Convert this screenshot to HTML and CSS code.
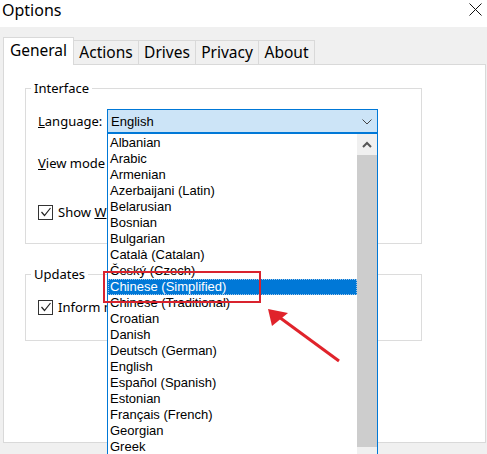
FILE: index.html
```html
<!DOCTYPE html>
<html>
<head>
<meta charset="utf-8">
<title>Options</title>
<link rel="stylesheet" href="styles.css">
</head>
<body>
<div class="window">
  <div class="titlebar">
    <span class="title">Options</span>
    <svg class="close" width="13" height="13" viewBox="0 0 13 13"><path d="M0.5 0.5 L12.5 12.5 M12.5 0.5 L0.5 12.5" stroke="#111" stroke-width="1" fill="none"/></svg>
  </div>
  <div class="tabs">
    <div class="tab tab-general active">General</div>
    <div class="tab tab-actions">Actions</div>
    <div class="tab tab-drives">Drives</div>
    <div class="tab tab-privacy">Privacy</div>
    <div class="tab tab-about">About</div>
  </div>
  <div class="panel">
    <fieldset class="group group-interface">
      <legend>Interface</legend>
      <div class="row row-lang">
        <span class="label"><u>L</u>anguage:</span>
        <div class="combo">
          <div class="combo-field">
            <span class="combo-text">English</span>
            <svg class="combo-chevron" width="10" height="6" viewBox="0 0 10 6"><polyline points="0.5,0.5 5,5 9.5,0.5" fill="none" stroke="#444" stroke-width="1"/></svg>
          </div>
          <div class="dropdown">
            <ul class="items">
              <li>Albanian</li>
              <li>Arabic</li>
              <li>Armenian</li>
              <li>Azerbaijani (Latin)</li>
              <li>Belarusian</li>
              <li>Bosnian</li>
              <li>Bulgarian</li>
              <li>Català (Catalan)</li>
              <li>Český (Czech)</li>
              <li class="selected">Chinese (Simplified)</li>
              <li>Chinese (Traditional)</li>
              <li>Croatian</li>
              <li>Danish</li>
              <li>Deutsch (German)</li>
              <li>English</li>
              <li>Español (Spanish)</li>
              <li>Estonian</li>
              <li>Français (French)</li>
              <li>Georgian</li>
              <li>Greek</li>
              <li>Hebrew</li>
            </ul>
            <div class="scrollbar">
              <div class="sb-up"><svg width="10" height="7" viewBox="0 0 10 7"><polyline points="1,6 5,2 9,6" fill="none" stroke="#555" stroke-width="2"/></svg></div>
              <div class="sb-thumb"></div>
            </div>
          </div>
        </div>
      </div>
      <div class="row row-view"><span class="label"><u>V</u>iew mode</span></div>
      <div class="row row-show">
        <span class="check"><svg width="12" height="12" viewBox="0 0 12 12"><polyline points="1.5,6 4.5,9.5 10.5,2" fill="none" stroke="#222" stroke-width="1.2"/></svg></span>
        <span class="check-label">Show <u>W</u>indows Explorer integration</span>
      </div>
    </fieldset>
    <fieldset class="group group-updates">
      <legend>Updates</legend>
      <div class="row row-inform">
        <span class="check"><svg width="12" height="12" viewBox="0 0 12 12"><polyline points="1.5,6 4.5,9.5 10.5,2" fill="none" stroke="#222" stroke-width="1.2"/></svg></span>
        <span class="check-label">Inform me about new versions</span>
      </div>
    </fieldset>
  </div>
  <div class="annot-box"></div>
  <svg class="annot-arrow" width="487" height="454" viewBox="0 0 487 454">
    <line x1="279" y1="317" x2="339" y2="361" stroke="#e0232b" stroke-width="3"/>
    <polygon points="268,309 272,326 288,313" fill="#e0232b"/>
  </svg>
</div>
</body>
</html>
```
FILE: styles.css
```css
html, body {
  margin: 0;
  padding: 0;
  overflow: hidden;
}
body {
  width: 487px;
  height: 454px;
  background: #f0f0f0;
  font-family: "Noto Sans", "Liberation Sans", sans-serif;
  color: #000;
}
.window {
  position: relative;
  width: 487px;
  height: 454px;
  overflow: hidden;
}
.titlebar {
  height: 27px;
  background: #fff;
  display: flex;
  justify-content: space-between;
  align-items: flex-start;
}
.title {
  font-size: 16px;
  line-height: 20px;
  padding-left: 2px;
}
.close {
  margin: 3px 5px 0 0;
}
.tabs {
  display: flex;
  align-items: flex-end;
  padding-left: 3px;
  margin-top: 10px;
  height: 27px;
}
.tab {
  box-sizing: border-box;
  height: 24px;
  line-height: 23px;
  font-size: 15.5px;
  text-align: center;
  border: 1px solid #d9d9d9;
  border-bottom: none;
  background: #f0f0f0;
  margin-left: -1px;
}
.tab-general { width: 71px; margin-left: 0; }
.tab-actions { width: 66px; }
.tab-drives { width: 58px; }
.tab-privacy { width: 64px; }
.tab-about { width: 57px; }
.tab.active {
  position: relative;
  z-index: 2;
  height: 28px;
  line-height: 24px;
  margin-bottom: -1px;
  background: #fff;
}
.panel {
  box-sizing: border-box;
  margin-left: 3px;
  width: 483px;
  height: 379px;
  background: #fff;
  border: 1px solid #d9d9d9;
  padding: 16px 0 0 21px;
}
.group {
  box-sizing: border-box;
  width: 397px;
  margin: 0;
  border: 1px solid #dcdcdc;
  padding: 13px 0 19px 5px;
  min-width: 0;
}
.group legend {
  font-size: 13px;
  line-height: 15px;
  padding: 0 3px;
  margin-left: 0;
}
.group-updates {
  margin-top: 23px;
  padding-bottom: 21px;
}
.row {
  display: flex;
  align-items: center;
  height: 24px;
  padding-left: 7px;
  font-size: 13px;
}
.label {
  flex: none;
  width: 69px;
  white-space: nowrap;
}
.row-view { margin-top: 18px; }
.row-show { margin-top: 25px; }
.check {
  box-sizing: border-box;
  flex: none;
  width: 15px;
  height: 15px;
  border: 1px solid #333;
  background: #fff;
  display: flex;
  align-items: center;
  justify-content: center;
  margin-right: 5px;
}
.check-label { white-space: nowrap; }
.combo {
  position: relative;
  flex: none;
  width: 271px;
  height: 24px;
}
.combo-field {
  box-sizing: border-box;
  height: 24px;
  border: 1px solid #0078d7;
  background: #cce4f7;
  display: flex;
  align-items: center;
  justify-content: space-between;
  padding: 0 5px 0 3px;
  font-family: "Liberation Sans", Arial, sans-serif;
  font-size: 13px;
}
.combo-chevron { margin-top: 1px; }
.dropdown {
  position: absolute;
  z-index: 5;
  left: 0;
  top: 24px;
  box-sizing: border-box;
  width: 271px;
  height: 345px;
  border: 1px solid #0078d7;
  background: #fff;
  display: flex;
  font-family: "Liberation Sans", Arial, sans-serif;
  font-size: 13px;
}
.items {
  list-style: none;
  margin: 0;
  padding: 1px 0 0 0;
  width: 249px;
  flex: none;
}
.items li {
  height: 16px;
  line-height: 16px;
  padding-left: 2px;
  white-space: nowrap;
}
.items li.selected {
  background: #0078d7;
  color: #fff;
  outline: 1px dotted #9fc6ea;
  outline-offset: -1px;
}
.scrollbar {
  width: 20px;
  flex: none;
  background: #f0f0f0;
  display: flex;
  flex-direction: column;
}
.sb-up {
  height: 21px;
  display: flex;
  align-items: center;
  justify-content: center;
}
.sb-thumb {
  height: 292px;
  background: #cdcdcd;
}
.annot-box {
  position: absolute;
  left: 103px;
  top: 271px;
  width: 154px;
  height: 28px;
  border: 2px solid #d9232e;
  z-index: 10;
}
.annot-arrow {
  position: absolute;
  left: 0;
  top: 0;
  z-index: 11;
  pointer-events: none;
}
```
